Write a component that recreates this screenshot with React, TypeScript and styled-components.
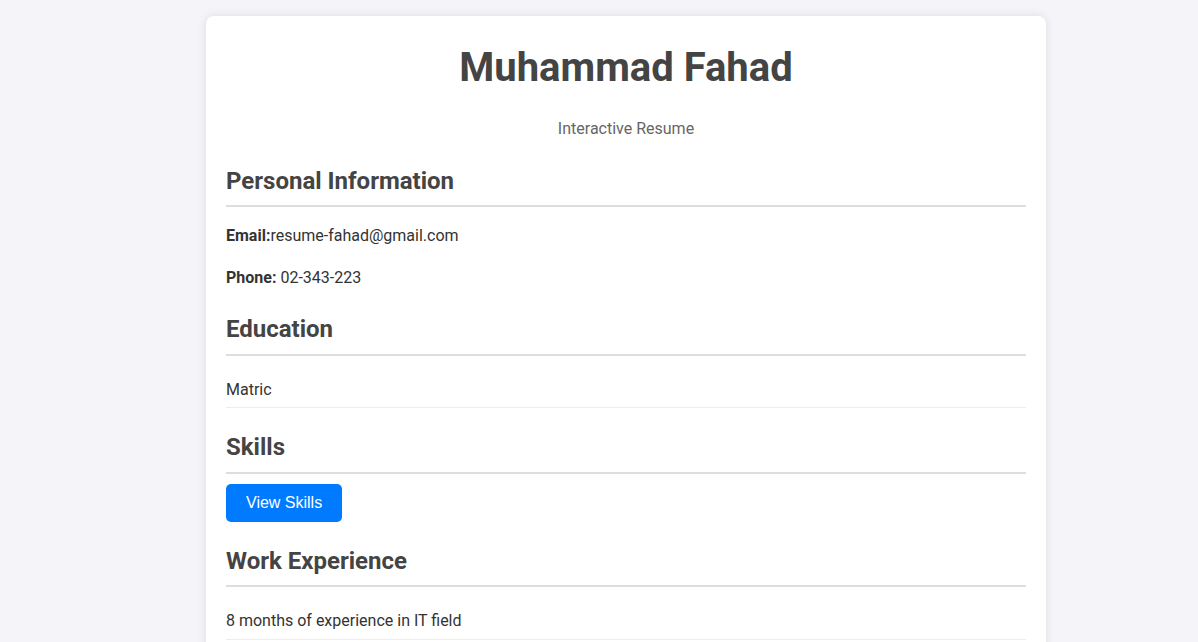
import React from "react";
import styled, { createGlobalStyle } from "styled-components";

const Global = createGlobalStyle`
  html { overflow: hidden; }
  body {
    margin: 0;
    background: #f4f4f9;
    font-family: Roboto, "Liberation Sans", Arial, sans-serif;
    font-size: 16px;
    line-height: 1.6;
    color: #333;
  }
`;

const Page = styled.div`
  display: flex;
  padding: 16px 0 0 206px;
`;

const Card = styled.main`
  width: 800px;
  padding: 20px 20px 40px;
  background: #fff;
  border-radius: 8px;
  box-shadow: 0 0 10px rgba(0, 0, 0, 0.1);
`;

const Title = styled.h1`
  margin: 0 0 16px;
  font-size: 40px;
  font-weight: 700;
  text-align: center;
  color: #444;
`;

const Subtitle = styled.p`
  margin: 0 0 20px;
  text-align: center;
  color: #666;
`;

const SectionTitle = styled.h2`
  margin: 20px 0 10px;
  padding-bottom: 5px;
  font-size: 24px;
  font-weight: 700;
  color: #444;
  border-bottom: 2px solid #ddd;
`;

const Para = styled.p`
  margin: 16px 0;
`;

const List = styled.ul`
  margin: 0;
  padding: 0;
  list-style: none;
`;

const Item = styled.li`
  padding: 11px 0 5px;
  border-bottom: 1px solid #eee;
`;

const Button = styled.button`
  display: block;
  margin-top: 10px;
  padding: 10px 20px;
  border: none;
  border-radius: 5px;
  background: #007bff;
  color: #fff;
  font-family: Arial, "Liberation Sans", sans-serif;
  font-size: 16px;
  line-height: normal;
  cursor: pointer;
`;

export default function App() {
  return (
    <>
      <Global />
      <Page>
        <Card>
          <Title>Muhammad Fahad</Title>
          <Subtitle>Interactive Resume</Subtitle>

          <SectionTitle>Personal Information</SectionTitle>
          <Para>
            <strong>Email:</strong>resume-fahad@gmail.com
          </Para>
          <Para>
            <strong>Phone:</strong> 02-343-223
          </Para>

          <SectionTitle>Education</SectionTitle>
          <List>
            <Item>Matric</Item>
          </List>

          <SectionTitle>Skills</SectionTitle>
          <Button>View Skills</Button>

          <SectionTitle>Work Experience</SectionTitle>
          <List>
            <Item>8 months of experience in IT field</Item>
          </List>
        </Card>
      </Page>
    </>
  );
}
